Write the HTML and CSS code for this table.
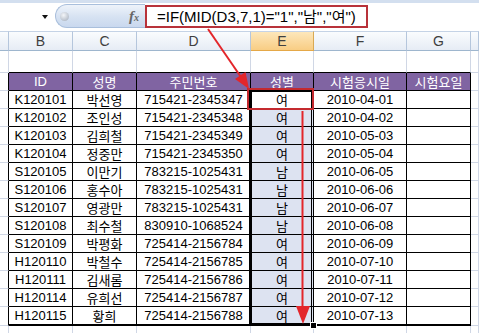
FILE: index.html
```html
<!DOCTYPE html>
<html lang="ko">
<head>
<meta charset="utf-8">
<link rel="stylesheet" href="styles.css">
</head>
<body>
<div class="page">
  <div class="fbar">
    <div class="namebox"><span class="dd"></span></div>
    <div class="mid"><span class="knob"></span><span class="fx">f<span class="fxs">x</span></span></div>
    <div class="input"><div class="fbox">=IF(MID(D3,7,1)="1","남","여")</div></div>
  </div>
  <div class="sheet">
    <div class="ch"></div><div class="ch">B</div><div class="ch">C</div><div class="ch">D</div><div class="ch sel">E</div><div class="ch">F</div><div class="ch">G</div><div class="ch"></div>

    <div class="c"></div><div class="c ab"></div><div class="c ab"></div><div class="c ab"></div><div class="c ab"></div><div class="c ab"></div><div class="c ab"></div><div class="c"></div>

    <div class="c lt"></div><div class="c th">ID</div><div class="c th">성명</div><div class="c th">주민번호</div><div class="c th">성별</div><div class="c th">시험응시일</div><div class="c th">시험요일</div><div class="c"></div>

    <div class="c lt"></div><div class="c td">K120101</div><div class="c td">박선영</div><div class="c td">715421-2345347</div><div class="c td act">여</div><div class="c td">2010-04-01</div><div class="c td"></div><div class="c"></div>
    <div class="c lt"></div><div class="c td">K120102</div><div class="c td">조인성</div><div class="c td">715421-2345348</div><div class="c td e">여</div><div class="c td">2010-04-02</div><div class="c td"></div><div class="c"></div>
    <div class="c lt"></div><div class="c td">K120103</div><div class="c td">김희철</div><div class="c td">715421-2345349</div><div class="c td e">여</div><div class="c td">2010-05-03</div><div class="c td"></div><div class="c"></div>
    <div class="c lt"></div><div class="c td">K120104</div><div class="c td">정중만</div><div class="c td">715421-2345350</div><div class="c td e">여</div><div class="c td">2010-05-04</div><div class="c td"></div><div class="c"></div>
    <div class="c lt"></div><div class="c td">S120105</div><div class="c td">이만기</div><div class="c td">783215-1025431</div><div class="c td e">남</div><div class="c td">2010-06-05</div><div class="c td"></div><div class="c"></div>
    <div class="c lt"></div><div class="c td">S120106</div><div class="c td">홍수아</div><div class="c td">783215-1025431</div><div class="c td e">남</div><div class="c td">2010-06-06</div><div class="c td"></div><div class="c"></div>
    <div class="c lt"></div><div class="c td">S120107</div><div class="c td">영광만</div><div class="c td">783215-1025431</div><div class="c td e">남</div><div class="c td">2010-06-07</div><div class="c td"></div><div class="c"></div>
    <div class="c lt"></div><div class="c td">S120108</div><div class="c td">최수철</div><div class="c td">830910-1068524</div><div class="c td e">남</div><div class="c td">2010-06-08</div><div class="c td"></div><div class="c"></div>
    <div class="c lt"></div><div class="c td">S120109</div><div class="c td">박평화</div><div class="c td">725414-2156784</div><div class="c td e">여</div><div class="c td">2010-06-09</div><div class="c td"></div><div class="c"></div>
    <div class="c lt"></div><div class="c td">H120110</div><div class="c td">박철수</div><div class="c td">725414-2156785</div><div class="c td e">여</div><div class="c td">2010-07-10</div><div class="c td"></div><div class="c"></div>
    <div class="c lt"></div><div class="c td">H120111</div><div class="c td">김새롬</div><div class="c td">725414-2156786</div><div class="c td e">여</div><div class="c td">2010-07-11</div><div class="c td"></div><div class="c"></div>
    <div class="c lt"></div><div class="c td">H120114</div><div class="c td">유희선</div><div class="c td">725414-2156787</div><div class="c td e">여</div><div class="c td">2010-07-12</div><div class="c td"></div><div class="c"></div>
    <div class="c lt lastl"></div><div class="c td last">H120115</div><div class="c td last">황희</div><div class="c td last">725414-2156788</div><div class="c td e last">여</div><div class="c td last">2010-07-13</div><div class="c td last"></div><div class="c lastr"></div>

    <div class="c"></div><div class="c"></div><div class="c"></div><div class="c"></div><div class="c"></div><div class="c"></div><div class="c"></div><div class="c"></div>
  </div>

  <div class="selbox"></div>
  <div class="handle"></div>
  <div class="redbox"></div>
  <svg class="arrows" width="479" height="333" viewBox="0 0 479 333">
    <line x1="208" y1="29" x2="243" y2="80" stroke="#e3262b" stroke-width="2"/>
    <polygon points="249,89 245.5,72 235,79" fill="#e3262b"/>
    <line x1="302.5" y1="111" x2="302.5" y2="308" stroke="#e3262b" stroke-width="2"/>
    <polygon points="296,306 310,306 303,324" fill="#e3262b"/>
  </svg>
</div>
</body>
</html>
```

FILE: styles.css
```css
html, body {
  margin: 0;
  padding: 0;
  background: #ffffff;
  overflow: hidden;
}
.page {
  position: relative;
  width: 479px;
  height: 333px;
  overflow: hidden;
  font-family: "Liberation Sans", "Noto Sans CJK KR", sans-serif;
}
.fbar {
  height: 31px;
  box-sizing: border-box;
  border-top: 3px solid #d3dfef;
  display: flex;
  background: #ffffff;
}
.namebox {
  width: 55px;
  position: relative;
}
.dd {
  position: absolute;
  left: 42px;
  top: 12px;
  width: 0;
  height: 0;
  border-left: 3.5px solid transparent;
  border-right: 3.5px solid transparent;
  border-top: 4px solid #111;
}
.mid {
  width: 90px;
  height: 24px;
  margin-top: 1px;
  box-sizing: border-box;
  border: 1px solid #a9bfdc;
  border-right: none;
  border-radius: 12px 0 0 12px;
  background: linear-gradient(#eef3fa, #d6e2f2 55%, #c9d8ee);
  display: flex;
  align-items: center;
  justify-content: space-between;
  padding-left: 4px;
  padding-right: 6px;
}
.knob {
  width: 9px;
  height: 9px;
  border-radius: 50%;
  background: radial-gradient(circle at 40% 35%, #f4f6f9, #b9c1cc 70%, #9aa4b2);
}
.fx {
  font-family: "Liberation Serif", serif;
  font-style: italic;
  font-weight: bold;
  font-size: 15px;
  color: #666;
  line-height: 1;
}
.fxs {
  font-size: 10px;
}
.input {
  flex: 1;
  position: relative;
}
.fbox {
  width: 223px;
  height: 23px;
  margin-top: 2px;
  box-sizing: border-box;
  border: 2px solid #b8323a;
  font-size: 15px;
  line-height: 19px;
  padding-left: 10px;
  color: #000;
  white-space: nowrap;
}
.sheet {
  display: grid;
  grid-template-columns: 9px 64px 64px 114px 63px 93px 64px 1fr;
  grid-template-rows: 20px 22px 18px repeat(12, 18px) 19px 18px;
}
.c, .ch {
  box-sizing: border-box;
  border-right: 1px solid #d0d7e5;
  border-bottom: 1px solid #d0d7e5;
  font-size: 13px;
  display: flex;
  align-items: center;
  justify-content: center;
  white-space: nowrap;
  color: #000;
}
.ch {
  background: linear-gradient(#fafcfe, #e6ecf5);
  border-right-color: #b5c6dc;
  border-bottom-color: #9eb6ce;
  border-top: 1px solid #c5d3e6;
  font-size: 14px;
  color: #3f3f3f;
}
.ch.sel {
  background: linear-gradient(#fde7bb, #f8cd84);
  border-right-color: #d9a953;
  border-bottom-color: #e5a847;
}
.ab {
  border-bottom-color: #000;
}
.lt {
  border-right-color: #000;
}
.th {
  background: #8064a2;
  color: #ffffff;
  border-right-color: #000;
  border-bottom-color: #000;
}
.td {
  border-right-color: #000;
  border-bottom-color: #000;
}
.e {
  background: #dde3f1;
}
.last {
  border-bottom: 2px solid #000;
}
.selbox {
  position: absolute;
  left: 249px;
  top: 89px;
  width: 65px;
  height: 237px;
  box-sizing: border-box;
  border: 3px double #000;
}
.handle {
  position: absolute;
  left: 310px;
  top: 322px;
  width: 5px;
  height: 5px;
  background: #000;
  border: 1px solid #fff;
}
.redbox {
  position: absolute;
  left: 247px;
  top: 88px;
  width: 67px;
  height: 22px;
  box-sizing: border-box;
  border: 2px solid #c42a2f;
}
.arrows {
  position: absolute;
  left: 0;
  top: 0;
  pointer-events: none;
}
```
